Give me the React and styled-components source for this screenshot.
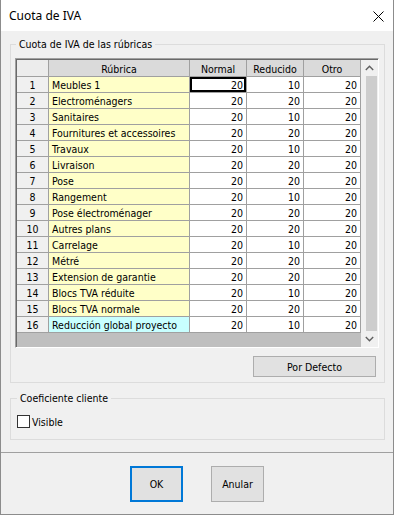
import React from "react";
import styled, { createGlobalStyle } from "styled-components";

const rubricas = [
    ["Meubles 1", 20, 10, 20],
    ["Electroménagers", 20, 20, 20],
    ["Sanitaires", 20, 10, 20],
    ["Fournitures et accessoires", 20, 20, 20],
    ["Travaux", 20, 10, 20],
    ["Livraison", 20, 20, 20],
    ["Pose", 20, 20, 20],
    ["Rangement", 20, 10, 20],
    ["Pose électroménager", 20, 20, 20],
    ["Autres plans", 20, 20, 20],
    ["Carrelage", 20, 10, 20],
    ["Métré", 20, 20, 20],
    ["Extension de garantie", 20, 20, 20],
    ["Blocs TVA réduite", 20, 10, 20],
    ["Blocs TVA normale", 20, 20, 20],
    ["Reducción global proyecto", 20, 10, 20],
];

export default function App() {
    return (
        <>
            <GlobalStyle />
            <Window>
                <TitleBar>
                    <span>Cuota de IVA</span>
                    <CloseButton>
                        <svg width="11" height="11" viewBox="0 0 11 11">
                            <path d="M0.5 0.5 L10.5 10.5 M10.5 0.5 L0.5 10.5" stroke="#000" strokeWidth="1" fill="none" />
                        </svg>
                    </CloseButton>
                </TitleBar>

                <Body>
                    <GroupBox>
                        <Legend>Cuota de IVA de las rúbricas</Legend>
                        <GridFrame>
                            <GridViewport>
                                <GridArea>
                                    <Table>
                                        <HeaderCell $corner />
                                        <HeaderCell>Rúbrica</HeaderCell>
                                        <HeaderCell>Normal</HeaderCell>
                                        <HeaderCell>Reducido</HeaderCell>
                                        <HeaderCell>Otro</HeaderCell>
                                        {rubricas.map((r, i) => (
                                            <React.Fragment key={i}>
                                                <RowNumber>{i + 1}</RowNumber>
                                                <NameCell $color={i === 15 ? "#c8ffff" : "#ffffc8"}>{r[0]}</NameCell>
                                                <ValueCell $selected={i === 0}>{r[1]}</ValueCell>
                                                <ValueCell>{r[2]}</ValueCell>
                                                <ValueCell>{r[3]}</ValueCell>
                                            </React.Fragment>
                                        ))}
                                    </Table>
                                </GridArea>
                                <ScrollBar>
                                    <ScrollArrow>
                                        <svg width="9" height="6" viewBox="0 0 9 6">
                                            <path d="M0.8 5 L4.5 1.3 L8.2 5" stroke="#606060" strokeWidth="1.4" fill="none" />
                                        </svg>
                                    </ScrollArrow>
                                    <ScrollTrack>
                                        <ScrollThumb />
                                    </ScrollTrack>
                                    <ScrollArrow>
                                        <svg width="9" height="6" viewBox="0 0 9 6">
                                            <path d="M0.8 1 L4.5 4.7 L8.2 1" stroke="#606060" strokeWidth="1.4" fill="none" />
                                        </svg>
                                    </ScrollArrow>
                                </ScrollBar>
                            </GridViewport>
                        </GridFrame>
                        <ButtonRow>
                            <Button $width={123} $height={21}>Por Defecto</Button>
                        </ButtonRow>
                    </GroupBox>

                    <GroupBox $second>
                        <Legend>Coeficiente cliente</Legend>
                        <CheckRow>
                            <CheckBox />
                            <span>Visible</span>
                        </CheckRow>
                    </GroupBox>
                </Body>

                <Footer>
                    <Button $width={53} $height={36} $primary>OK</Button>
                    <Button $width={53} $height={36}>Anular</Button>
                </Footer>
            </Window>
        </>
    );
}

const GlobalStyle = createGlobalStyle`
    * {
        box-sizing: border-box;
    }

    body {
        margin: 0;
        background: #f0f0f0;
        font-family: "DejaVu Sans Condensed", "Liberation Sans", sans-serif;
        font-size: 10.5px;
        color: #000000;
    }
`;

const Window = styled.div`
    width: 394px;
    height: 515px;
    display: flex;
    flex-direction: column;

    border: 1px solid #8c8c8c;
    border-top: none;
    background-color: #f0f0f0;
`;

const TitleBar = styled.div`
    height: 31px;
    display: flex;
    align-items: center;
    justify-content: space-between;

    padding-left: 8px;
    padding-right: 8px;

    background-color: #ffffff;
    font-family: "Noto Sans", "Liberation Sans", sans-serif;
    font-size: 12px;
`;

const CloseButton = styled.div`
    width: 14px;
    height: 14px;
    display: flex;
    align-items: center;
    justify-content: center;
    margin-top: 1px;
`;

const Body = styled.div`
    flex: 1;
    display: flex;
    flex-direction: column;

    padding: 5px 8px 0 9px;
`;

const GroupBox = styled.fieldset`
    margin: ${props => (props.$second ? "7px 0 0 0" : "0")};
    padding: ${props => (props.$second ? "8px 4px 10px 5px" : "6px 5px 5px 4px")};

    border: 1px solid #dcdcdc;
    display: flex;
    flex-direction: column;
`;

const Legend = styled.legend`
    padding: 0 3px;
    margin-left: 1px;
    line-height: 16px;
`;

const GridFrame = styled.div`
    width: 364px;
    height: 290px;

    border: 1px solid;
    border-color: #a0a0a0 #ffffff #ffffff #a0a0a0;
`;

const GridViewport = styled.div`
    width: 100%;
    height: 100%;
    display: flex;

    border-top: 1px solid #696969;
    border-left: 1px solid #696969;
`;

const GridArea = styled.div`
    width: 344px;
    background-color: #bfbfbf;
`;

const Table = styled.div`
    display: grid;
    grid-template-columns: 32px 141px 57px 57px 57px;
    grid-template-rows: 17px;
    grid-auto-rows: 16px;
`;

const Cell = styled.div`
    display: flex;
    align-items: center;
    overflow: hidden;
    white-space: nowrap;
    padding-top: 1px;

    border-right: 1px solid #a0a0a0;
    border-bottom: 1px solid #a0a0a0;
`;

const HeaderCell = styled(Cell)`
    justify-content: center;
    background-color: ${props => (props.$corner ? "#ececec" : "#dadada")};
`;

const RowNumber = styled(Cell)`
    justify-content: center;
    background-color: #f0f0f0;
`;

const NameCell = styled(Cell)`
    padding-left: 3px;
    background-color: ${props => props.$color};
`;

const ValueCell = styled(Cell)`
    justify-content: flex-end;
    padding-right: 3px;
    background-color: #ffffff;
    box-shadow: ${props => (props.$selected ? "inset 0 0 0 2px #000000" : "none")};
`;

const ScrollBar = styled.div`
    width: 17px;
    display: flex;
    flex-direction: column;
    background-color: #f0f0f0;
`;

const ScrollArrow = styled.div`
    height: 16px;
    display: flex;
    align-items: center;
    justify-content: center;
`;

const ScrollTrack = styled.div`
    flex: 1;
    display: flex;
    justify-content: flex-end;
    padding-right: 1px;
`;

const ScrollThumb = styled.div`
    width: 11px;
    height: 100%;
    background-color: #cdcdcd;
`;

const ButtonRow = styled.div`
    display: flex;
    justify-content: flex-end;
    margin-top: 8px;
    padding-right: 3px;
`;

const Button = styled.button`
    width: ${props => props.$width}px;
    height: ${props => props.$height}px;
    padding: 0;

    background-color: #e1e1e1;
    border: ${props => (props.$primary ? "2px solid #0078d7" : "1px solid #adadad")};

    font-family: inherit;
    font-size: 10.5px;
    color: #000000;
`;

const CheckRow = styled.div`
    display: flex;
    align-items: center;
    gap: 2px;
    height: 15px;
    padding-left: 1px;
`;

const CheckBox = styled.span`
    width: 13px;
    height: 13px;
    border: 1px solid #333333;
    background-color: #ffffff;
`;

const Footer = styled.div`
    display: flex;
    justify-content: center;
    gap: 28px;

    padding: 13px 0 12px 0;
    border-top: 1px solid #a0a0a0;
`;
